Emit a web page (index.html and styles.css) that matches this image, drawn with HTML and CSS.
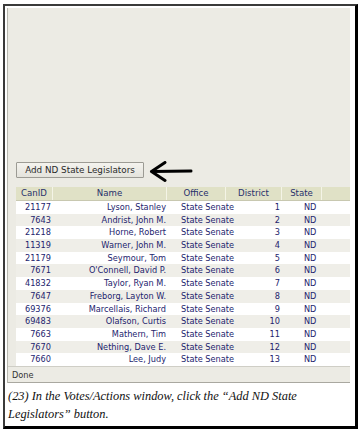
FILE: index.html
```html
<!DOCTYPE html>
<html>
<head>
<meta charset="utf-8">
<link rel="stylesheet" href="styles.css">
</head>
<body>
<div class="figure">
  <div class="window">
    <div class="canvas"></div>
    <div class="toolbar">
      <button class="btn">Add ND State Legislators</button>
      <svg class="arrow" width="44" height="22" viewBox="0 0 44 22">
        <path d="M16 1.5 L2.5 10.5 L16 19.5" fill="none" stroke="#000" stroke-width="3" stroke-linecap="round" stroke-linejoin="round"/>
        <path d="M3 10.5 L42 10" fill="none" stroke="#000" stroke-width="3" stroke-linecap="round"/>
      </svg>
    </div>
    <div class="table">
      <div class="thead">
        <div class="th c-id">CanID</div>
        <div class="th c-name">Name</div>
        <div class="th c-office">Office</div>
        <div class="th c-dist">District</div>
        <div class="th c-state">State</div>
        <div class="th c-fill"></div>
      </div>
      <div class="tbody">
        <div class="tr"><div class="td c-id">21177</div><div class="td c-name">Lyson, Stanley</div><div class="td c-office">State Senate</div><div class="td c-dist">1</div><div class="td c-state">ND</div></div>
        <div class="tr"><div class="td c-id">7643</div><div class="td c-name">Andrist, John M.</div><div class="td c-office">State Senate</div><div class="td c-dist">2</div><div class="td c-state">ND</div></div>
        <div class="tr"><div class="td c-id">21218</div><div class="td c-name">Horne, Robert</div><div class="td c-office">State Senate</div><div class="td c-dist">3</div><div class="td c-state">ND</div></div>
        <div class="tr"><div class="td c-id">11319</div><div class="td c-name">Warner, John M.</div><div class="td c-office">State Senate</div><div class="td c-dist">4</div><div class="td c-state">ND</div></div>
        <div class="tr"><div class="td c-id">21179</div><div class="td c-name">Seymour, Tom</div><div class="td c-office">State Senate</div><div class="td c-dist">5</div><div class="td c-state">ND</div></div>
        <div class="tr"><div class="td c-id">7671</div><div class="td c-name">O'Connell, David P.</div><div class="td c-office">State Senate</div><div class="td c-dist">6</div><div class="td c-state">ND</div></div>
        <div class="tr"><div class="td c-id">41832</div><div class="td c-name">Taylor, Ryan M.</div><div class="td c-office">State Senate</div><div class="td c-dist">7</div><div class="td c-state">ND</div></div>
        <div class="tr"><div class="td c-id">7647</div><div class="td c-name">Freborg, Layton W.</div><div class="td c-office">State Senate</div><div class="td c-dist">8</div><div class="td c-state">ND</div></div>
        <div class="tr"><div class="td c-id">69376</div><div class="td c-name">Marcellais, Richard</div><div class="td c-office">State Senate</div><div class="td c-dist">9</div><div class="td c-state">ND</div></div>
        <div class="tr"><div class="td c-id">69483</div><div class="td c-name">Olafson, Curtis</div><div class="td c-office">State Senate</div><div class="td c-dist">10</div><div class="td c-state">ND</div></div>
        <div class="tr"><div class="td c-id">7663</div><div class="td c-name">Mathern, Tim</div><div class="td c-office">State Senate</div><div class="td c-dist">11</div><div class="td c-state">ND</div></div>
        <div class="tr"><div class="td c-id">7670</div><div class="td c-name">Nething, Dave E.</div><div class="td c-office">State Senate</div><div class="td c-dist">12</div><div class="td c-state">ND</div></div>
        <div class="tr"><div class="td c-id">7660</div><div class="td c-name">Lee, Judy</div><div class="td c-office">State Senate</div><div class="td c-dist">13</div><div class="td c-state">ND</div></div>
      </div>
    </div>
    <div class="status">Done</div>
  </div>
  <p class="caption">(23) In the Votes/Actions window, click the “Add ND State Legislators” button.</p>
</div>
</body>
</html>
```

FILE: styles.css
```css
html, body {
  margin: 0;
  padding: 0;
  background: #ffffff;
}

.figure {
  box-sizing: border-box;
  width: 355px;
  height: 425px;
  margin: 4px 0 0 3px;
  border-left: 2px solid #3a3a3a;
  border-top: 2px solid #3a3a3a;
  border-right: 3px solid #000;
  border-bottom: 3px solid #000;
  padding: 2px 5px 0 2px;
  overflow: hidden;
}

.window {
  background: #ecebe4;
  border-left: 1px solid #b8b8b0;
  display: flex;
  flex-direction: column;
  font-family: "DejaVu Sans", sans-serif;
}

.canvas {
  height: 154px;
}

.toolbar {
  display: flex;
  align-items: center;
  padding-left: 8px;
  height: 16px;
}

.btn {
  box-sizing: border-box;
  height: 16px;
  width: 128px;
  margin: 0;
  padding: 0;
  font-family: "DejaVu Sans", sans-serif;
  font-size: 8.8px;
  color: #2a2a2a;
  background: linear-gradient(#f4f3ee, #e4e3dc);
  border: 1px solid #9c9b94;
  border-radius: 1px;
}

.arrow {
  margin-left: 5px;
  margin-top: 3px;
}

.table {
  margin: 9px 0 0 8px;
  width: 334px;
}

.thead {
  display: flex;
  height: 13px;
  background: #e0e1c6;
  border-bottom: 1px solid #c8c8b0;
}

.th {
  box-sizing: border-box;
  font-size: 8.6px;
  line-height: 13px;
  color: #27306b;
  text-align: center;
  border-right: 1px solid #f4f4e6;
}

.tbody {
  height: 165px;
  overflow: hidden;
  background: #fff;
}

.tr {
  display: flex;
  height: 12.7px;
}

.tr:nth-child(even) {
  background: #efeee8;
}

.td {
  box-sizing: border-box;
  font-size: 8.2px;
  line-height: 12.7px;
  color: #23246e;
  white-space: nowrap;
}

.c-id { width: 37px; }
.c-name { width: 114px; }
.c-office { width: 59px; }
.c-dist { width: 56px; }
.c-state { width: 40px; }
.c-fill { flex: 1; border-right: none; }

.td.c-id { text-align: right; padding-right: 2px; }
.td.c-name { text-align: right; padding-right: 1px; }
.td.c-office { padding-left: 14px; }
.td.c-dist { text-align: right; padding-right: 2px; }
.td.c-state { padding-left: 22px; }

.status {
  height: 17px;
  box-sizing: border-box;
  border-top: 1px solid #cfcec6;
  border-bottom: 1px solid #a9a8a0;
  padding-left: 4px;
  font-size: 8.2px;
  line-height: 16px;
  color: #333;
}

.caption {
  margin: 0;
  padding: 4px 0 0 1px;
  font-family: "Liberation Serif", serif;
  font-style: italic;
  font-size: 12.4px;
  line-height: 18px;
  color: #111;
}
```
